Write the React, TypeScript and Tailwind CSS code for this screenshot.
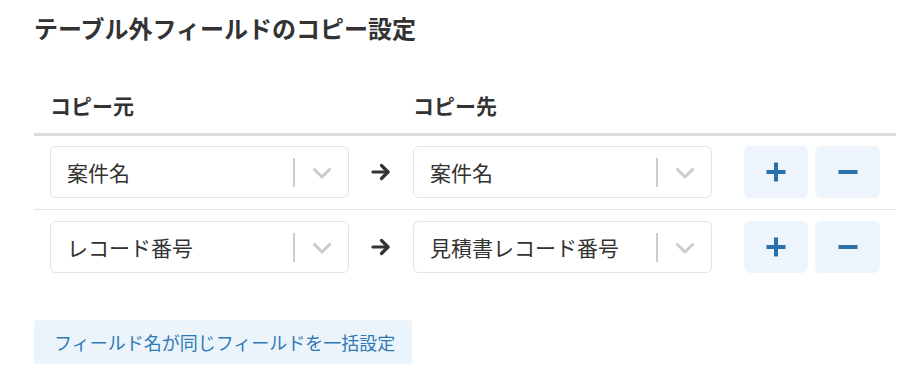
import React from "react";

const font = { fontFamily: '"Noto Sans CJK JP", "Noto Sans", sans-serif' };

function Chevron() {
  return (
    <svg width="18" height="11" viewBox="0 0 18 11" fill="none">
      <polyline points="1.5,1.5 9,9 16.5,1.5" stroke="#cccccc" strokeWidth="3" strokeLinecap="round" strokeLinejoin="round" />
    </svg>
  );
}

function Arrow() {
  return (
    <svg width="20" height="18" viewBox="0 0 20 18" fill="none">
      <line x1="2" y1="9" x2="17" y2="9" stroke="#333333" strokeWidth="3.2" strokeLinecap="round" />
      <polyline points="10.5,2.5 17,9 10.5,15.5" stroke="#333333" strokeWidth="3.2" strokeLinecap="round" strokeLinejoin="round" />
    </svg>
  );
}

function Select({ value }: { value: string }) {
  return (
    <div className="flex h-[52px] w-[299px] items-center rounded-[6px] border border-[#e3e3e3] bg-white">
      <div className="flex-1 pl-[16px] text-[21px] leading-[30px] text-[#333333]">{value}</div>
      <div className="h-[29px] w-[2px] bg-[#cccccc]" />
      <div className="flex w-[53px] items-center justify-center pt-[2px]">
        <Chevron />
      </div>
    </div>
  );
}

function PlusIcon() {
  return (
    <svg width="20" height="20" viewBox="0 0 20 20">
      <rect x="8" y="0.5" width="4" height="19" fill="#2a70ab" />
      <rect x="0.5" y="8" width="19" height="4" fill="#2a70ab" />
    </svg>
  );
}

function MinusIcon() {
  return (
    <svg width="20" height="20" viewBox="0 0 20 20">
      <rect x="0.5" y="8" width="19" height="4" fill="#2a70ab" />
    </svg>
  );
}

function Row({ from, to, last }: { from: string; to: string; last?: boolean }) {
  return (
    <div className={"flex items-center pl-[16px] pb-[11px] " + (last ? "pt-[11px]" : "pt-[10px] border-b border-[#e2e2e2]")}>
      <Select value={from} />
      <div className="flex w-[64px] justify-center">
        <Arrow />
      </div>
      <Select value={to} />
      <div className="ml-[32px] flex gap-[7px]">
        <button className="flex h-[52px] w-[64px] items-center justify-center rounded-[6px] bg-[#edf4fb]">
          <PlusIcon />
        </button>
        <button className="flex h-[52px] w-[65px] items-center justify-center rounded-[6px] bg-[#edf4fb]">
          <MinusIcon />
        </button>
      </div>
    </div>
  );
}

export default function App() {
  return (
    <div className="min-h-[382px] w-[916px] bg-white pl-[34px] pr-[20px] pt-[12px]" style={font}>
      <div className="h-[32px] text-[24px] font-bold leading-[32px] text-[#333333]">テーブル外フィールドのコピー設定</div>
      <div className="mt-[46px] flex border-b-[3px] border-[#dcdcdc] pb-[13px] pl-[16px] text-[21px] font-bold leading-[30px] text-[#333333]">
        <div className="w-[363px]">コピー元</div>
        <div>コピー先</div>
      </div>
      <Row from="案件名" to="案件名" />
      <Row from="レコード番号" to="見積書レコード番号" last />
      <button className="mt-[36px] flex h-[44px] w-[378px] items-center rounded-[4px] bg-[#ecf4fb] pl-[20px] text-[18px] text-[#2e78b5]">
        フィールド名が同じフィールドを一括設定
      </button>
    </div>
  );
}
